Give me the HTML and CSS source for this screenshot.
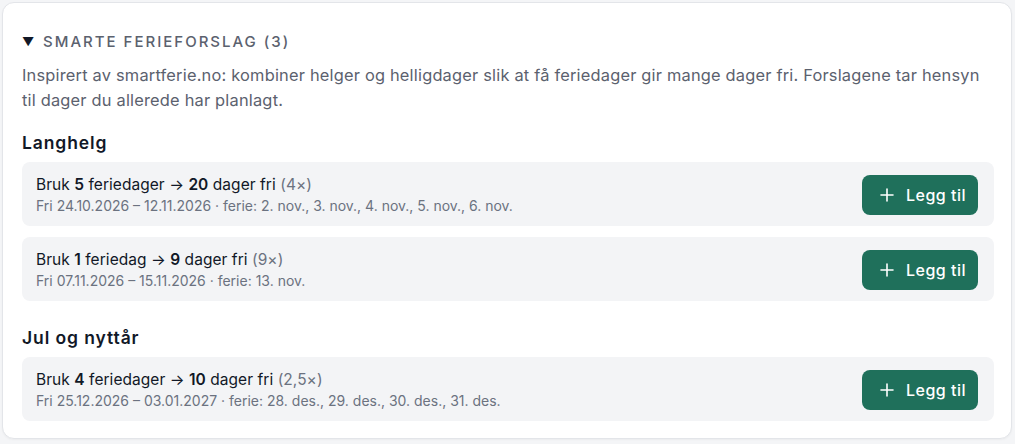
FILE: index.html
```html
<!DOCTYPE html>
<html lang="no">

<head>
  <meta charset="UTF-8">
  <meta name="viewport" content="width=device-width, initial-scale=1.0">
  <title>Smarte ferieforslag</title>
  <link rel="stylesheet" href="styles.css">
</head>

<body>

  <details class="panel" open>
    <summary class="panel-title"><span class="caret">▼</span>Smarte ferieforslag (3)</summary>
    <p class="intro">Inspirert av smartferie.no: kombiner helger og helligdager slik at få feriedager gir mange dager fri. Forslagene tar hensyn til dager du allerede har planlagt.</p>

    <section class="group">
      <h3>Langhelg</h3>
      <div class="suggestion">
        <div class="info">
          <div class="headline">Bruk <b>5</b> feriedager → <b>20</b> dager fri <span class="ratio">(4×)</span></div>
          <div class="details">Fri 24.10.2026 – 12.11.2026 · ferie: 2. nov., 3. nov., 4. nov., 5. nov., 6. nov.</div>
        </div>
        <button class="add-btn" type="button">
          <svg viewBox="0 0 16 16" width="16" height="16"><path d="M8 2v12M2 8h12" stroke="currentColor" stroke-width="1.6" stroke-linecap="round" fill="none"/></svg>
          Legg til
        </button>
      </div>
      <div class="suggestion">
        <div class="info">
          <div class="headline">Bruk <b>1</b> feriedag → <b>9</b> dager fri <span class="ratio">(9×)</span></div>
          <div class="details">Fri 07.11.2026 – 15.11.2026 · ferie: 13. nov.</div>
        </div>
        <button class="add-btn" type="button">
          <svg viewBox="0 0 16 16" width="16" height="16"><path d="M8 2v12M2 8h12" stroke="currentColor" stroke-width="1.6" stroke-linecap="round" fill="none"/></svg>
          Legg til
        </button>
      </div>
    </section>

    <section class="group">
      <h3>Jul og nyttår</h3>
      <div class="suggestion">
        <div class="info">
          <div class="headline">Bruk <b>4</b> feriedager → <b>10</b> dager fri <span class="ratio">(2,5×)</span></div>
          <div class="details">Fri 25.12.2026 – 03.01.2027 · ferie: 28. des., 29. des., 30. des., 31. des.</div>
        </div>
        <button class="add-btn" type="button">
          <svg viewBox="0 0 16 16" width="16" height="16"><path d="M8 2v12M2 8h12" stroke="currentColor" stroke-width="1.6" stroke-linecap="round" fill="none"/></svg>
          Legg til
        </button>
      </div>
    </section>
  </details>

</body>

</html>
```

FILE: styles.css
```css
body {
  margin: 0;
  padding: 2px 3px 3px 2px;
  background-color: #f4f5f7;
  font-family: Inter, "Noto Sans", sans-serif;
  color: #111827;
}

.panel {
  background-color: white;
  border: 1px solid #e3e5e9;
  border-radius: 12px;
  padding: 27px 17px 17px 19px;
  box-shadow: 0 1px 2px rgba(0, 0, 0, 0.04);
}

.panel-title {
  list-style: none;
  display: flex;
  align-items: center;
  height: 22px;
  font-size: 15px;
  font-weight: 500;
  letter-spacing: 2px;
  text-transform: uppercase;
  color: #5b616e;
  cursor: pointer;
}

.panel-title::-webkit-details-marker {
  display: none;
}

.caret {
  font-size: 12px;
  color: #111827;
  width: 21px;
  letter-spacing: 0;
}

.intro {
  margin: 11px 0 0 0;
  font-size: 16.4px;
  letter-spacing: 0.2px;
  line-height: 25px;
  color: #5b616e;
}

.group {
  margin-top: 18px;
}

.group + .group {
  margin-top: 25px;
}

.group h3 {
  margin: 0 0 7px 0;
  font-size: 17.5px;
  letter-spacing: 0.9px;
  line-height: 24px;
  font-weight: 600;
}

.suggestion {
  display: flex;
  align-items: center;
  justify-content: space-between;
  background-color: #f3f4f6;
  border-radius: 8px;
  padding: 12px 16px 11px 14px;
  height: 41px;
}

.suggestion + .suggestion {
  margin-top: 11px;
}

.headline {
  font-size: 15.5px;
  letter-spacing: 0.05px;
  line-height: 22px;
}

.headline b {
  font-weight: 600;
}

.ratio {
  color: #6b7280;
}

.details {
  margin-top: 1px;
  font-size: 14px;
  line-height: 18px;
  color: #6b7280;
}

.add-btn {
  display: flex;
  align-items: center;
  gap: 11px;
  height: 40px;
  padding: 0 12px 0 17px;
  border: none;
  border-radius: 8px;
  background-color: #1f705b;
  color: white;
  font-family: inherit;
  font-size: 16px;
  letter-spacing: 0.5px;
  font-weight: 500;
  cursor: pointer;
}
```
